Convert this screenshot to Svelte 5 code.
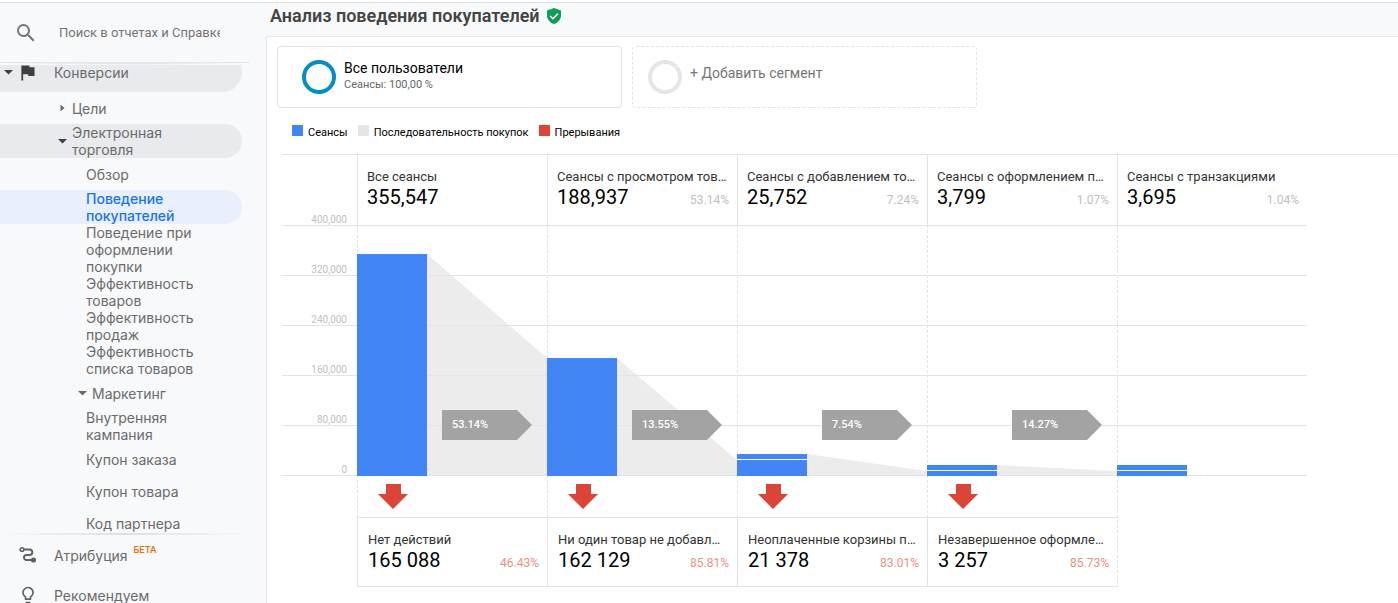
<script lang="ts">
  type NavItem = {
    label: string;
    kind: 'root' | 'group' | 'subgroup' | 'leaf';
    open?: boolean;
    shaded?: boolean;
    active?: boolean;
  };

  type Step = {
    label: string;
    value: string;
    share: string;
    sessions: number;
    entered: number;
    next: string;
    exit?: { label: string; value: string; share: string };
  };

  const nav: NavItem[] = [
    { label: 'Конверсии', kind: 'root', open: true, shaded: true },
    { label: 'Цели', kind: 'group' },
    { label: 'Электронная торговля', kind: 'group', open: true, shaded: true },
    { label: 'Обзор', kind: 'leaf' },
    { label: 'Поведение покупателей', kind: 'leaf', active: true },
    { label: 'Поведение при оформлении покупки', kind: 'leaf' },
    { label: 'Эффективность товаров', kind: 'leaf' },
    { label: 'Эффективность продаж', kind: 'leaf' },
    { label: 'Эффективность списка товаров', kind: 'leaf' },
    { label: 'Маркетинг', kind: 'subgroup', open: true },
    { label: 'Внутренняя кампания', kind: 'leaf' },
    { label: 'Купон заказа', kind: 'leaf' },
    { label: 'Купон товара', kind: 'leaf' },
    { label: 'Код партнера', kind: 'leaf' }
  ];

  const legend = [
    { label: 'Сеансы', tone: 'sessions' },
    { label: 'Последовательность покупок', tone: 'sequence' },
    { label: 'Прерывания', tone: 'exits' }
  ];

  const ticks = ['400,000', '320,000', '240,000', '160,000', '80,000', '0'];

  // sessions: the part that came from the previous step, entered: the part that joined here (px)
  const steps: Step[] = [
    {
      label: 'Все сеансы', value: '355,547', share: '', sessions: 222, entered: 0, next: '53.14%',
      exit: { label: 'Нет действий', value: '165 088', share: '46.43%' }
    },
    {
      label: 'Сеансы с просмотром товаров', value: '188,937', share: '53.14%', sessions: 118, entered: 0, next: '13.55%',
      exit: { label: 'Ни один товар не добавлен в корзину', value: '162 129', share: '85.81%' }
    },
    {
      label: 'Сеансы с добавлением товаров', value: '25,752', share: '7.24%', sessions: 16, entered: 5, next: '7.54%',
      exit: { label: 'Неоплаченные корзины покупок', value: '21 378', share: '83.01%' }
    },
    {
      label: 'Сеансы с оформлением покупки', value: '3,799', share: '1.07%', sessions: 5, entered: 5, next: '14.27%',
      exit: { label: 'Незавершенное оформление', value: '3 257', share: '85.73%' }
    },
    { label: 'Сеансы с транзакциями', value: '3,695', share: '1.04%', sessions: 5, entered: 5, next: '' }
  ];

  const plotHeight = 251;

  function flowPoints(index: number): string {
    const from = steps[index];
    const to = steps[index + 1];
    const height = from.sessions + from.entered + (from.entered ? 1 : 0);
    return `0,${plotHeight - height} 100,${plotHeight - to.sessions} 100,${plotHeight} 0,${plotHeight}`;
  }
</script>

<div class="page">
  <aside class="sidebar">
    <label class="search">
      <svg viewBox="0 0 24 24" width="24" height="24" aria-hidden="true">
        <path d="M15.5 14h-.79l-.28-.27A6.47 6.47 0 0 0 16 9.5 6.5 6.5 0 1 0 9.5 16c1.61 0 3.09-.59 4.23-1.57l.27.28v.79l5 4.99L20.49 19l-4.99-5zm-6 0a4.5 4.5 0 1 1 0-9 4.5 4.5 0 0 1 0 9z" />
      </svg>
      <input type="text" placeholder="Поиск в отчетах и Справке" aria-label="Поиск в отчетах и Справке" />
    </label>
    <div class="divider"></div>

    <nav>
      <ul>
        {#each nav as item}
          <li>
            {#if item.kind === 'leaf'}
              <a class="row leaf" class:active={item.active} href="#report">{item.label}</a>
            {:else}
              <button class="row {item.kind}" class:shaded={item.shaded} type="button" aria-expanded={!!item.open}>
                <svg class="caret" class:dark={item.shaded} viewBox="0 0 10 10" aria-hidden="true">
                  {#if item.open}
                    <path d="M1 3h9L5.5 7.5z" />
                  {:else}
                    <path d="M3.5 1.5v7L7.5 5z" />
                  {/if}
                </svg>
                {#if item.kind === 'root'}
                  <svg class="flag" viewBox="0 0 24 24" aria-hidden="true">
                    <path d="M14.4 6L14 4H5v17h2v-7h5.6l.4 2h7V6z" />
                  </svg>
                {/if}
                <span>{item.label}</span>
              </button>
            {/if}
          </li>
        {/each}
      </ul>
    </nav>

    <div class="divider faded"></div>
    <div class="extras">
      <a class="extra" href="#attribution">
        <svg viewBox="0 0 20 20" aria-hidden="true">
          <g fill="none" stroke="currentColor" stroke-width="2">
            <circle cx="4" cy="4.5" r="1.8" stroke-width="1.6" />
            <path d="M6 4.5h5.5a2.8 2.8 0 0 1 0 5.6H8.5a2.5 2.5 0 0 0 0 5H14" />
          </g>
          <circle cx="15.5" cy="15" r="2.6" fill="currentColor" />
        </svg>
        <span>Атрибуция</span>
        <sup>БЕТА</sup>
      </a>
      <a class="extra" href="#discover">
        <svg viewBox="0 0 24 24" aria-hidden="true">
          <path fill="currentColor" d="M9 21c0 .55.45 1 1 1h4c.55 0 1-.45 1-1v-1H9v1zm3-19a7 7 0 0 0-7 7c0 2.38 1.19 4.47 3 5.74V17c0 .55.45 1 1 1h6c.55 0 1-.45 1-1v-2.26A7 7 0 0 0 12 2zm2.85 11.1l-.85.6V16h-4v-2.3l-.85-.6A5 5 0 1 1 17 9c0 1.63-.8 3.16-2.15 4.1z" />
        </svg>
        <span>Рекомендуем</span>
      </a>
    </div>
  </aside>

  <main>
    <header>
      <h1>Анализ поведения покупателей</h1>
      <svg viewBox="0 0 14 16" width="14" height="16" aria-hidden="true">
        <path fill="#0f9d58" d="M7 0l7 2.6v5C14 11.5 11 15 7 16 3 15 0 11.5 0 7.6v-5z" />
        <path fill="none" stroke="#fff" stroke-width="1.6" d="M3.2 8l2.7 2.7 5-5" />
      </svg>
    </header>

    <section class="report">
      <div class="segments">
        <button class="segment" type="button">
          <span class="ring"></span>
          <span class="segment-text">
            <span class="segment-name">Все пользователи</span>
            <span class="segment-note">Сеансы: 100,00 %</span>
          </span>
        </button>
        <button class="segment empty" type="button">
          <span class="ring"></span>
          <span class="segment-text">+ Добавить сегмент</span>
        </button>
      </div>

      <ul class="legend">
        {#each legend as entry}
          <li><i class={entry.tone}></i>{entry.label}</li>
        {/each}
      </ul>

      <div class="funnel">
        <div class="grid-lines"></div>
        <div class="axis">
          {#each ticks as tick}
            <span>{tick}</span>
          {/each}
        </div>

        {#each steps as step, i}
          <div class="step" style={`grid-column: ${i + 2}`}>
            <div class="card">
              <div class="card-label">{step.label}</div>
              <div class="card-row">
                <strong>{step.value}</strong>
                <span>{step.share}</span>
              </div>
            </div>

            <div class="plot">
              <div class="bar">
                {#if step.entered}
                  <div style={`height: ${step.entered}px`}></div>
                {/if}
                <div style={`height: ${step.sessions}px`}></div>
              </div>
              {#if step.next}
                <svg class="flow" viewBox="0 0 100 251" preserveAspectRatio="none" aria-hidden="true">
                  <polygon points={flowPoints(i)} />
                </svg>
                <span class="rate">{step.next}</span>
              {/if}
            </div>

            <div class="drop">
              {#if step.exit}
                <svg viewBox="0 0 30 25" width="30" height="25" aria-hidden="true">
                  <path d="M8 0h15v10h7L15 25 0 10h8z" />
                </svg>
              {/if}
            </div>

            {#if step.exit}
              <div class="card exit">
                <div class="card-label">{step.exit.label}</div>
                <div class="card-row">
                  <strong>{step.exit.value}</strong>
                  <span>{step.exit.share}</span>
                </div>
              </div>
            {/if}
          </div>
        {/each}
      </div>
    </section>
  </main>
</div>

<style>
  :global(body) {
    background: #fff;
    font-family: Roboto, 'Liberation Sans', sans-serif;
    margin: 0;
    overflow: hidden;
    padding-top: 2px;
  }

  .page {
    background: #f8f9fb;
    border-top: 1px solid #dadce0;
    box-sizing: border-box;
    display: flex;
    height: calc(100vh - 2px);
    overflow: hidden;
  }

  button {
    background: none;
    border: 0;
    cursor: pointer;
    font: inherit;
    text-align: left;
  }

  ul {
    list-style: none;
    margin: 0;
    padding: 0;
  }

  .sidebar {
    color: #6b6b6b;
    display: flex;
    flex: 0 0 266px;
    flex-direction: column;
    font-family: Inter, 'Open Sans', sans-serif;
    font-size: 14px;
    line-height: 17px;
  }

  .search {
    align-items: center;
    display: flex;
    flex: none;
    gap: 21px;
    height: 59px;
    padding-left: 14px;
  }

  .search svg {
    fill: #757575;
  }

  .search input {
    background: none;
    border: 0;
    color: #757575;
    font-family: Roboto, sans-serif;
    font-size: 13px;
    outline: 0;
    padding: 0;
    width: 161px;
  }

  .search input::placeholder {
    color: #757575;
  }

  .divider {
    background: radial-gradient(ellipse at top, #dcdedf, transparent 70%);
    border-top: 1px solid #e4e5e7;
    flex: none;
    height: 2px;
    width: 250px;
  }

  .divider.faded {
    background: linear-gradient(to right, transparent, #dedfe1, transparent);
    border: 0;
  }

  nav {
    flex: 1;
    min-height: 0;
    overflow: hidden;
  }

  /* the list stands scrolled a little under the search box */
  nav ul {
    margin-top: -13px;
  }

  .row {
    align-items: center;
    border-radius: 0 20px 20px 0;
    box-sizing: border-box;
    color: inherit;
    display: flex;
    gap: 5px;
    min-height: 32px;
    padding: 0 30px 0 57px;
    text-decoration: none;
    width: 242px;
  }

  .row.root {
    gap: 4px;
    min-height: 40px;
    padding-left: 3px;
  }

  .row.root span {
    padding-left: 12px;
  }

  .row.subgroup {
    padding-left: 77px;
  }

  .row.leaf {
    padding-left: 86px;
  }

  .row.shaded {
    background: #e8eaed;
  }

  .row.active {
    background: #e8f0fe;
    color: #1a73e8;
    font-weight: 500;
  }

  .caret {
    fill: #6b6b6b;
    flex: none;
    height: 10px;
    width: 10px;
  }

  .caret.dark,
  .flag {
    fill: #3c4043;
  }

  .flag {
    flex: none;
    height: 21px;
    width: 21px;
  }

  .extras {
    flex: 0 0 68px;
    overflow: hidden;
  }

  .extra {
    align-items: center;
    color: inherit;
    display: flex;
    height: 40px;
    padding-left: 18px;
    text-decoration: none;
  }

  .extra svg {
    color: #5f6368;
    height: 20px;
    margin-right: 16px;
    width: 20px;
  }

  .extra sup {
    align-self: flex-start;
    color: #e8710a;
    font-size: 9px;
    font-weight: 600;
    line-height: 30px;
    padding-left: 6px;
  }

  main {
    display: flex;
    flex: 1;
    flex-direction: column;
    min-width: 0;
  }

  header {
    align-items: center;
    box-sizing: border-box;
    display: flex;
    gap: 7px;
    height: 33px;
    padding: 0 4px 7px;
  }

  h1 {
    color: #444;
    font-size: 18px;
    font-weight: 600;
    line-height: 24px;
    margin: 0;
  }

  .report {
    background: #fff;
    border: solid #e5e6e8;
    border-width: 1px 0 0 1px;
    flex: 1;
  }

  .segments {
    display: flex;
    gap: 10px;
    padding: 9px 10px 0;
  }

  .segment {
    border: 1px solid #e2e2e2;
    border-radius: 4px;
    box-sizing: border-box;
    color: #000;
    display: flex;
    flex: 0 1 345px;
    font-size: 14px;
    gap: 8px;
    height: 62px;
    line-height: 17px;
    padding: 13px 24px;
  }

  .segment.empty {
    border-style: dashed;
    color: #757575;
    padding-left: 15px;
  }

  .ring {
    border: 4px solid #058dc7;
    border-radius: 50%;
    box-sizing: border-box;
    flex: none;
    height: 34px;
    width: 34px;
  }

  .empty .ring {
    border-color: #e5e5e5;
  }

  .segment-text {
    display: flex;
    flex-direction: column;
  }

  .empty .segment-text {
    padding-top: 5px;
  }

  .segment-note {
    color: #666;
    font-size: 11px;
    line-height: 15px;
  }

  .legend {
    align-items: flex-start;
    box-sizing: border-box;
    color: #000;
    display: flex;
    font-size: 11px;
    gap: 10px;
    height: 46px;
    line-height: 15px;
    padding: 17px 0 0 25px;
  }

  .legend li {
    display: flex;
    gap: 5px;
  }

  .legend i {
    height: 11px;
    width: 11px;
  }

  .sessions {
    background: #4285f4;
  }

  .sequence {
    background: #e5e5e5;
  }

  .exits {
    background: #db4437;
  }

  .funnel {
    border-top: 1px solid #e5e5e5;
    display: grid;
    grid-template-columns: 75px repeat(5, minmax(0, 1fr));
    grid-template-rows: 70px 251px 41px 70px;
    margin-left: 15px;
    padding-right: 91px;
  }

  .grid-lines {
    background: linear-gradient(#e3e3e3 1px, transparent 1px) 0 0 / 100% 50px;
    grid-area: 2 / 1 / 3 / -1;
  }

  .axis {
    color: #c0c0c0;
    display: flex;
    flex-direction: column;
    font-size: 10px;
    grid-area: 1 / 1 / 3 / 2;
    justify-content: flex-end;
    line-height: 12px;
    padding-right: 10px;
  }

  .axis span {
    align-items: flex-end;
    display: flex;
    height: 50px;
    justify-content: flex-end;
  }

  .step {
    background: repeating-linear-gradient(#e3e3e3 0 3px, transparent 3px 5px) 0 0 / 1px 100% no-repeat;
    display: grid;
    grid-row: 1 / -1;
    grid-template-columns: minmax(0, 1fr);
    grid-template-rows: subgrid;
  }

  .card {
    border-left: 1px solid #e3e3e3;
    box-sizing: border-box;
    padding: 13px 8px 0 9px;
  }

  .card.exit {
    border-bottom: 1px solid #e3e3e3;
    border-top: 1px solid #e3e3e3;
    padding-left: 10px;
  }

  .card-label {
    color: #333;
    font-size: 13px;
    line-height: 18px;
    overflow: hidden;
    text-overflow: ellipsis;
    white-space: nowrap;
  }

  .exit .card-label {
    margin-right: 2px;
  }

  .card-row {
    align-items: baseline;
    display: flex;
    justify-content: space-between;
    line-height: 22px;
  }

  .card-row strong {
    color: #000;
    font-size: 20px;
    font-weight: 400;
  }

  .card-row span {
    color: #c0c0c0;
    font-size: 12px;
  }

  .exit .card-row span {
    color: #ea8f87;
  }

  .plot {
    align-items: flex-end;
    display: flex;
    position: relative;
  }

  .bar {
    background: #fff;
    display: flex;
    flex: 0 0 70px;
    flex-direction: column;
    gap: 1px;
  }

  .bar div {
    background: #4285f4;
  }

  .flow {
    fill: rgba(228, 228, 228, 0.7);
    flex: 1;
    height: 251px;
    min-width: 0;
  }

  .rate {
    background: #a3a3a3;
    bottom: 36px;
    box-sizing: border-box;
    clip-path: polygon(0 0, calc(100% - 15px) 0, 100% 50%, calc(100% - 15px) 100%, 0 100%);
    color: #fff;
    font-size: 11px;
    font-weight: 500;
    height: 30px;
    left: 85px;
    line-height: 29px;
    padding-left: 10px;
    position: absolute;
    right: 15px;
  }

  .drop {
    padding: 8px 0 0 21px;
  }

  .drop svg {
    display: block;
    fill: #db4437;
  }
</style>
